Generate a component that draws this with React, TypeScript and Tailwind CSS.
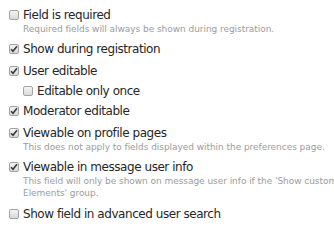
import React from 'react';

type Option = {
  label: string;
  checked: boolean;
  hint?: string[];
  nested?: boolean;
};

const options: Option[] = [
  { label: 'Field is required', checked: false, hint: ['Required fields will always be shown during registration.'] },
  { label: 'Show during registration', checked: true },
  { label: 'User editable', checked: true },
  { label: 'Editable only once', checked: false, nested: true },
  { label: 'Moderator editable', checked: true },
  { label: 'Viewable on profile pages', checked: true, hint: ['This does not apply to fields displayed within the preferences page.'] },
  {
    label: 'Viewable in message user info',
    checked: true,
    hint: [
      "This field will only be shown on message user info if the 'Show custom fields' option is enabled in the 'Message",
      "Elements' group.",
    ],
  },
  { label: 'Show field in advanced user search', checked: false },
];

const Box = ({ checked }: { checked: boolean }) => (
  <span className="flex h-[10px] w-[10px] shrink-0 items-center justify-center rounded-[2px] border border-[#a3a3a3] bg-gradient-to-b from-[#f4f4f4] to-[#d9d9d9]">
    {checked && (
      <svg width="8" height="8" viewBox="0 0 8 8">
        <path d="M1 4.2 L3 6.3 L7 1.2" fill="none" stroke="#3a3a3a" strokeWidth="1.6" />
      </svg>
    )}
  </span>
);

export default function App() {
  return (
    <div className="h-[237px] w-[334px] overflow-hidden bg-white pl-[9px] pt-[7px] font-['DejaVu_Sans',sans-serif]">
      <ul className="flex flex-col gap-[6px]">
        {options.map((o, i) => (
          <li
            key={o.label}
            className={o.nested ? '-my-[2px] pl-[14px]' : i === options.length - 1 ? 'mt-[1px]' : ''}
          >
            <div className="flex h-[16px] items-center gap-[4px] text-[12px] tracking-[-0.45px] text-[#262626]">
              <Box checked={o.checked} />
              <span className="whitespace-nowrap">{o.label}</span>
            </div>
            {o.hint && (
              <div className="pl-[14px] text-[9px] leading-[12px] tracking-[-0.05px] text-[#9c9c9c]">
                {o.hint.map((h) => (
                  <div key={h} className="whitespace-nowrap">{h}</div>
                ))}
              </div>
            )}
          </li>
        ))}
      </ul>
    </div>
  );
}
